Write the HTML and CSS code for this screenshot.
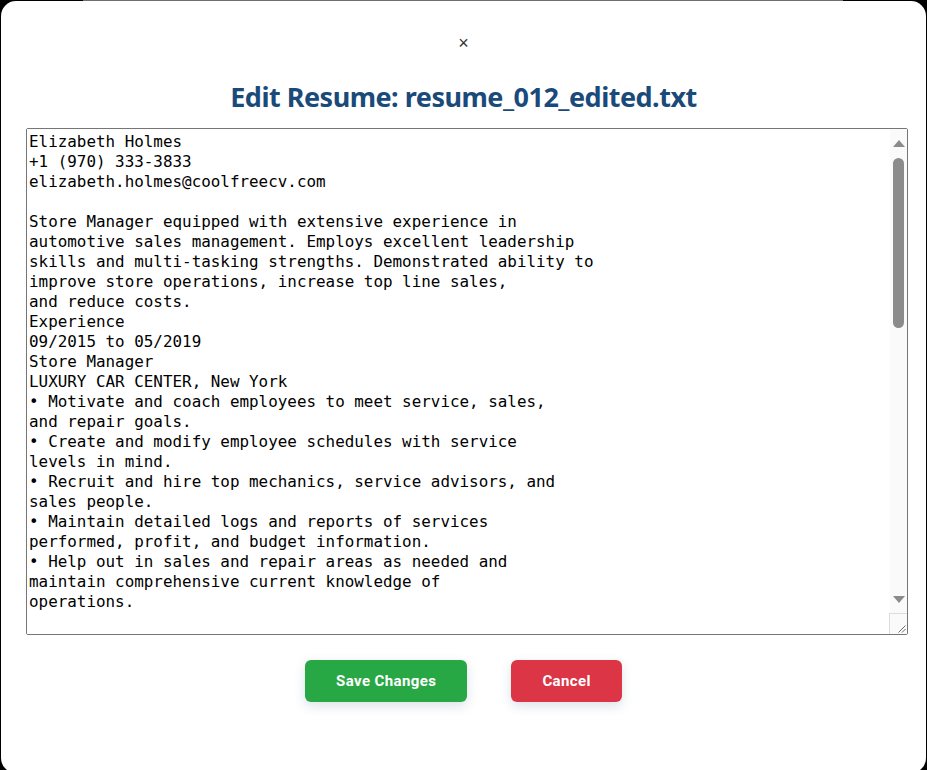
FILE: index.html
```html
<!DOCTYPE html>
<html lang="en">
<head>
<meta charset="utf-8">
<title>Edit Resume</title>
<link rel="stylesheet" href="styles.css">
</head>
<body>
<div class="strip"></div>
<div class="modal">
  <div class="close-row"><button class="close" type="button" aria-label="Close">×</button></div>
  <h2 class="title">Edit Resume: resume_012_edited.txt</h2>
  <div class="editor-wrap">
  <textarea class="editor" spellcheck="false">
Elizabeth Holmes
+1 (970) 333-3833
elizabeth.holmes@coolfreecv.com

Store Manager equipped with extensive experience in
automotive sales management. Employs excellent leadership
skills and multi-tasking strengths. Demonstrated ability to
improve store operations, increase top line sales,
and reduce costs.
Experience
09/2015 to 05/2019
Store Manager
LUXURY CAR CENTER, New York
• Motivate and coach employees to meet service, sales,
and repair goals.
• Create and modify employee schedules with service
levels in mind.
• Recruit and hire top mechanics, service advisors, and
sales people.
• Maintain detailed logs and reports of services
performed, profit, and budget information.
• Help out in sales and repair areas as needed and
maintain comprehensive current knowledge of
operations.

02/2011 to 08/2015
Assistant Store Manager
PREMIER AUTO GROUP, New York
• Supervised daily store operations and a team of
15 sales associates.
• Assisted in developing annual budgets and
sales forecasts.
• Handled customer complaints and resolved issues
to ensure customer satisfaction.
• Trained new employees on company policies and
sales techniques.

06/2008 to 01/2011
Sales Associate
CITY MOTORS, Albany
• Consistently exceeded monthly sales targets.
• Built lasting relationships with customers.
• Assisted with inventory management.

Education
2008
Bachelor of Science: Business Administration
State University of New York - Albany, NY

Skills
• Sales management
• Staff development
• Inventory control
• Budgeting and forecasting
• Customer service
• Scheduling
• Conflict resolution
• Team leadership

Certifications
Certified Automotive Sales Professional (2014)

Languages
English - Native
Spanish - Fluent

References
Available upon request.</textarea>
    <div class="vscroll" aria-hidden="true">
      <span class="arrow arrow-up"></span>
      <span class="thumb"></span>
      <span class="arrow arrow-down"></span>
    </div>
    <div class="corner" aria-hidden="true">
      <svg width="9" height="9" viewBox="0 0 9 9"><path d="M8.5 1.5 L1.5 8.5 M8.5 5 L5 8.5" stroke="#6a6a6a" stroke-width="1" fill="none"/></svg>
    </div>
  </div>
  <div class="actions">
    <button class="btn btn-save" type="button">Save Changes</button>
    <button class="btn btn-cancel" type="button">Cancel</button>
  </div>
</div>
</body>
</html>
```
FILE: styles.css
```css
html, body {
  margin: 0;
  padding: 0;
  height: 100%;
  overflow: hidden;
  background: #000;
}

.strip {
  position: absolute;
  top: 0;
  left: 83px;
  width: 760px;
  height: 1px;
  background: #6e6e6e;
}

.modal {
  position: relative;
  margin: 1px 1px 0 1px;
  height: 772px;
  box-sizing: border-box;
  background: #fff;
  border-radius: 15px;
  padding: 0 25px;
  display: flex;
  flex-direction: column;
  align-items: center;
}

.close-row {
  padding-top: 30px;
  height: 24px;
  display: flex;
  justify-content: center;
}

.close {
  border: 0;
  background: none;
  padding: 0;
  margin: 0;
  font-family: "Liberation Sans", Arial, sans-serif;
  font-size: 18px;
  line-height: 24px;
  color: #333;
  cursor: pointer;
}

.title {
  margin: 25px 0 0 0;
  font-family: "Noto Sans", sans-serif;
  font-weight: 700;
  font-size: 27px;
  line-height: 33px;
  color: #1a4a7a;
  letter-spacing: -0.5px;
}

.editor-wrap {
  position: relative;
  margin: 15px -7px 0 0;
  align-self: stretch;
  height: 507px;
  display: flex;
}

.editor {
  flex: 1;
  height: 507px;
  box-sizing: border-box;
  border: 1px solid #767676;
  border-radius: 2px;
  padding: 3px 2px 1px 2px;
  font-family: "DejaVu Sans Mono", monospace;
  font-size: 15.9px;
  line-height: 20px;
  color: #000;
  background: #fff;
  white-space: pre-wrap;
  scrollbar-width: none;
  resize: none;
}

.vscroll {
  position: absolute;
  top: 1px;
  right: 1px;
  width: 17px;
  height: 485px;
  background: #fafafa;
}

.thumb {
  position: absolute;
  top: 29px;
  left: 3px;
  width: 11px;
  height: 170px;
  border-radius: 6px;
  background: #8b8b8b;
}

.arrow {
  position: absolute;
  left: 3px;
  width: 0;
  height: 0;
  border-left: 6px solid transparent;
  border-right: 6px solid transparent;
}

.arrow-up {
  top: 11px;
  border-bottom: 7px solid #8b8b8b;
}

.arrow-down {
  top: 467px;
  border-top: 7px solid #8b8b8b;
}

.corner {
  position: absolute;
  right: 1px;
  bottom: 1px;
  width: 16px;
  height: 19px;
  background: #fafafa;
  border-top: 1px solid #dcdcdc;
  border-left: 1px solid #dcdcdc;
  display: flex;
  align-items: flex-end;
  justify-content: flex-end;
  padding: 0 1px 1px 0;
  box-sizing: content-box;
}

.corner svg {
  display: block;
}

.actions {
  margin-top: 25px;
  display: flex;
  gap: 44px;
}

.btn {
  height: 42px;
  padding: 0 31px;
  border: 0;
  border-radius: 6px;
  color: #fff;
  font-family: Roboto, "Liberation Sans", sans-serif;
  font-weight: 700;
  font-size: 15px;
  letter-spacing: 0.4px;
  box-shadow: 0 4px 12px rgba(40, 70, 120, 0.16);
  cursor: pointer;
}

.btn-save {
  background: #28a745;
}

.btn-cancel {
  background: #dc3545;
}
```
